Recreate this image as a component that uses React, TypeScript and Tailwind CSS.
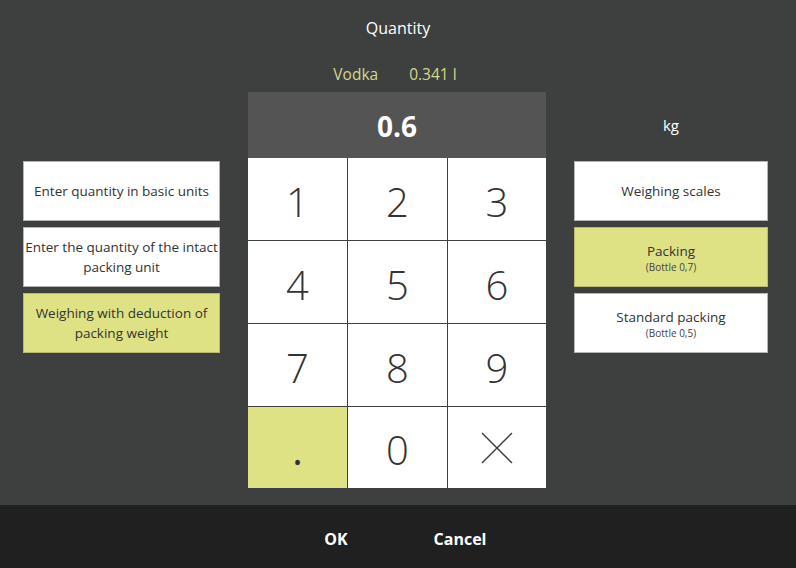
import React from "react"

const font = { fontFamily: '"Open Sans", "Noto Sans", sans-serif' }

type SideButton = { label: string; sub?: string; active?: boolean }

const leftButtons: SideButton[] = [
  { label: "Enter quantity in basic units" },
  { label: "Enter the quantity of the intact packing unit" },
  { label: "Weighing with deduction of packing weight", active: true },
]

const rightButtons: SideButton[] = [
  { label: "Weighing scales" },
  { label: "Packing", sub: "(Bottle 0,7)", active: true },
  { label: "Standard packing", sub: "(Bottle 0,5)" },
]

const keys = ["1", "2", "3", "4", "5", "6", "7", "8", "9", ".", "0", "del"]

const SideBtn = ({ label, sub, active }: SideButton) => (
  <div
    className={`h-[60px] flex flex-col items-center justify-center text-center leading-[20px] border ${
      active ? "bg-[#dfe185] border-[#b9bb6a]" : "bg-white border-[#b5b5b5]"
    }`}
  >
    <div className="text-[13.5px] text-[#333] px-px">{label}</div>
    {sub && <div className="text-[10px] leading-[12px] text-[#444]">{sub}</div>}
  </div>
)

const Key = ({ k }: { k: string }) => (
  <div
    className={`flex items-center justify-center text-[40px] text-[#333] ${
      k === "." ? "bg-[#dfe185] font-normal" : "bg-white font-light"
    }`}
  >
    {k === "del" ? (
      <svg width="34" height="34" viewBox="0 0 34 34">
        <path d="M2 2 L32 32 M32 2 L2 32" stroke="#3a3a3a" strokeWidth="1.4" fill="none" />
      </svg>
    ) : (
      <span className="pt-[5px]">{k}</span>
    )}
  </div>
)

export default function App() {
  return (
    <div className="w-[796px] h-[568px] flex flex-col bg-[#3e403f]" style={font}>
      <div className="flex-1 flex flex-col">
        <div className="h-[56px] flex items-center justify-center text-white text-[16px]">Quantity</div>
        <div className="h-[36px] flex items-center justify-center gap-[31px] text-[#d4d88a] text-[15.5px] pr-[6px] pt-[2px]">
          <span>Vodka</span>
          <span>0.341 l</span>
        </div>

        <div className="flex pl-[23px] gap-[28px]">
          {/* left options */}
          <div className="w-[197px] pt-[69px] flex flex-col gap-[6px]">
            {leftButtons.map((b) => (
              <SideBtn key={b.label} {...b} />
            ))}
          </div>

          {/* keypad */}
          <div className="w-[298px]">
            <div className="h-[66px] pt-[2px] bg-[#545454] flex items-center justify-center text-white text-[28px] font-bold">
              0.6
            </div>
            <div className="grid grid-cols-[99px_99px_98px] grid-rows-[82px_82px_82px_81px] gap-px bg-[#3e403f]">
              {keys.map((k) => (
                <Key key={k} k={k} />
              ))}
            </div>
          </div>

          {/* right options */}
          <div className="w-[194px] flex flex-col">
            <div className="h-[66px] flex items-center justify-center text-white text-[15px]">kg</div>
            <div className="mt-[3px] flex flex-col gap-[6px]">
              {rightButtons.map((b) => (
                <SideBtn key={b.label} {...b} />
              ))}
            </div>
          </div>
        </div>
      </div>

      <div className="h-[63px] pt-[5px] bg-[#202020] flex items-center justify-center text-white font-bold text-[16px]">
        <div className="w-[124px] text-center">OK</div>
        <div className="w-[124px] text-center">Cancel</div>
      </div>
    </div>
  )
}
